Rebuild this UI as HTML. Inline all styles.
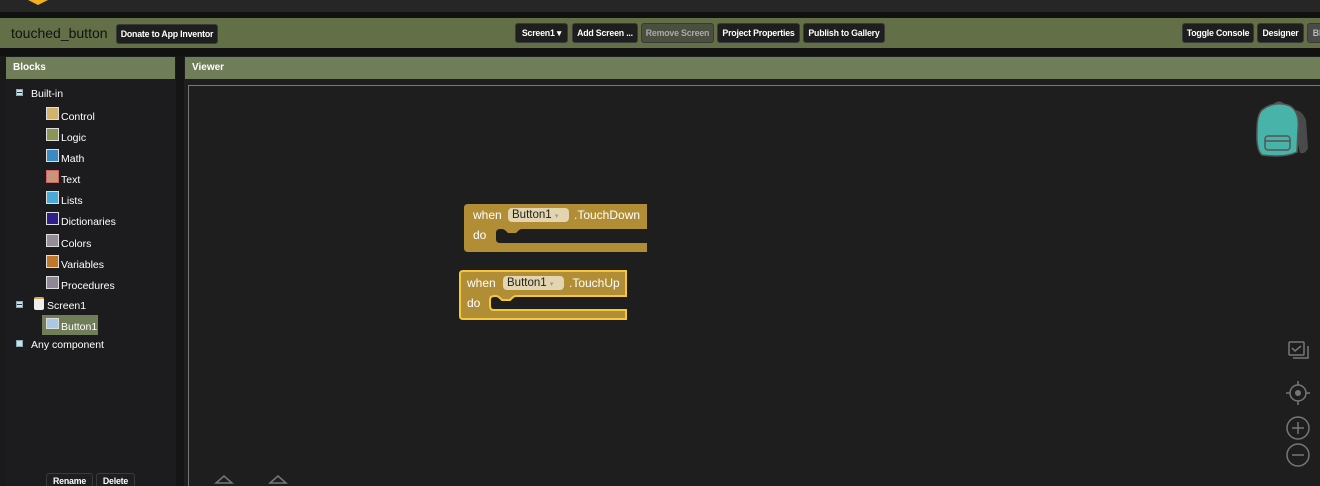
<!DOCTYPE html>
<html style="overflow:hidden;width:1320px;height:486px"><head><style>
*{margin:0;padding:0;box-sizing:border-box}
body{width:1320px;height:486px;background:#1a1a1a;font-family:"Liberation Sans",sans-serif;position:relative;overflow:hidden;color:#fff}
.a{position:absolute}
.btn{position:absolute;top:23px;height:20px;background:#1e1e1e;border:1px solid #3a3a3a;border-radius:3px;color:#fff;font-size:8.8px;font-weight:bold;line-height:18px;text-align:center;white-space:nowrap;overflow:hidden;letter-spacing:-0.2px}
.hdr{background:#6f7d58;font-size:10px;font-weight:bold;line-height:22px;padding-left:7px}
.it{position:absolute;font-size:10.5px;color:#fff}
.sw{position:absolute;width:13px;height:13px;border:1.5px solid #ddd}
.blk{position:absolute;font-size:12px;color:#fff}
.dd{position:absolute;background:#e3d5b0;color:#222;border-radius:4px;font-size:11.5px;height:14px;line-height:14px;padding-left:4px}
</style></head><body>
<div class="a" style="left:0;top:0;width:1320px;height:12px;background:#262626"></div>
<div class="a" style="left:28px;top:0;width:20px;height:5px;background:#f0b020;clip-path:polygon(0 0,100% 0,50% 100%)"></div>
<div class="a" style="left:0;top:12px;width:1320px;height:6px;background:#111"></div>
<div class="a" style="left:0;top:18px;width:1320px;height:30px;background:#636f47"></div>
<div class="a" style="left:11px;top:25px;font-size:14px;color:#111;">touched_button</div>
<div class="btn" style="left:116px;top:24px;width:102px">Donate to App Inventor</div>
<div class="btn" style="left:515px;width:53px">Screen1 ▾</div>
<div class="btn" style="left:572px;width:66px">Add Screen ...</div>
<div class="btn" style="left:641px;width:73px;background:#4a4f40;color:#aaa">Remove Screen</div>
<div class="btn" style="left:717px;width:83px">Project Properties</div>
<div class="btn" style="left:803px;width:82px">Publish to Gallery</div>
<div class="btn" style="left:1182px;width:72px">Toggle Console</div>
<div class="btn" style="left:1257px;width:47px">Designer</div>
<div class="btn" style="left:1307px;width:20px;background:#4a4a4a;color:#bbb">Bl</div>
<div class="a" style="left:0;top:48px;width:1320px;height:8px;background:#111"></div>

<div class="a" style="left:6px;top:56px;width:170px;height:430px;background:#1c1c1e"></div>
<div class="a hdr" style="left:6px;top:57px;width:169px;height:22px">Blocks</div>
<div class="a" style="left:176px;top:56px;width:8px;height:430px;background:#151515"></div>
<div class="a" style="left:184px;top:56px;width:1136px;height:430px;background:#1e1e1e"></div>
<div class="a hdr" style="left:185px;top:57px;width:1135px;height:22px">Viewer</div>
<div class="a" style="left:188px;top:85px;width:1132px;height:401px;border:1px solid #777;border-right:none;border-bottom:none"></div>

<div class="a" style="left:16px;top:89px;width:7px;height:7px;background:#cfdcef;border:1px solid #8aa"></div>
<div class="a" style="left:17px;top:92px;width:5px;height:1px;background:#234"></div>
<div class="it" style="left:31px;top:88px">Built-in</div>
<div class="sw" style="left:46px;top:107px;background:#d3b26a"></div><div class="it" style="left:61px;top:111px">Control</div>
<div class="sw" style="left:46px;top:128px;background:#8c9456"></div><div class="it" style="left:61px;top:132px">Logic</div>
<div class="sw" style="left:46px;top:149px;background:#3b8ac6"></div><div class="it" style="left:61px;top:153px">Math</div>
<div class="sw" style="left:46px;top:170px;background:#c8957b;border-color:#c66"></div><div class="it" style="left:61px;top:174px">Text</div>
<div class="sw" style="left:46px;top:191px;background:#4aa9d8"></div><div class="it" style="left:61px;top:195px">Lists</div>
<div class="sw" style="left:46px;top:212px;background:#2e1f8a"></div><div class="it" style="left:61px;top:216px">Dictionaries</div>
<div class="sw" style="left:46px;top:234px;background:#958c95"></div><div class="it" style="left:61px;top:238px">Colors</div>
<div class="sw" style="left:46px;top:255px;background:#c0772b"></div><div class="it" style="left:61px;top:259px">Variables</div>
<div class="sw" style="left:46px;top:276px;background:#8f8795"></div><div class="it" style="left:61px;top:280px">Procedures</div>
<div class="a" style="left:16px;top:301px;width:7px;height:7px;background:#cfdcef;border:1px solid #8aa"></div>
<div class="a" style="left:17px;top:304px;width:5px;height:1px;background:#234"></div>
<div class="a" style="left:34px;top:297px;width:10px;height:13px;background:#eee;border-top:2px solid #d9a84a;border-radius:2px"></div>
<div class="it" style="left:47px;top:300px">Screen1</div>
<div class="a" style="left:42px;top:315px;width:56px;height:20px;background:#6f7d58"></div>
<div class="a" style="left:46px;top:318px;width:13px;height:11px;background:#a9c8e4;border:1px solid #ddd"></div>
<div class="it" style="left:61px;top:321px">Button1</div>
<div class="a" style="left:16px;top:340px;width:7px;height:7px;background:#cfdcef;border:1px solid #8aa"></div>
<div class="it" style="left:31px;top:339px">Any component</div>
<div class="btn" style="left:46px;top:473px;width:47px;height:16px;line-height:14px">Rename</div>
<div class="btn" style="left:96px;top:473px;width:39px;height:16px;line-height:14px">Delete</div>

<svg class="a" style="left:0;top:0" width="1320" height="486">
<path d="M468 204 H647 V229 H522 Q520 229 518 231 L516 233 H508 L506 231 Q504 229 502 229 H500 Q496 229 496 233 V239 Q496 243 500 243 H647 V252 H468 Q464 252 464 248 V208 Q464 204 468 204Z" fill="#b18e35"/>
<path d="M463 271 H626 V296 H516 Q514 296 512 298 L510 300 H502 L500 298 Q498 296 496 296 H494 Q490 296 490 300 V306 Q490 310 494 310 H626 V319 H463 Q460 319 460 316 V274 Q460 271 463 271Z" fill="#b18e35" stroke="#f5c838" stroke-width="2"/>
<g fill="none" stroke="#777" stroke-width="1.5">
<rect x="1289" y="342" width="15" height="13" rx="1"/><path d="M1293 358 H1308 V346"/><path d="M1292 348 l3 3 l6 -5"/>
<circle cx="1298" cy="393" r="8"/><path d="M1298 381 V385 M1298 401 V405 M1286 393 H1290 M1306 393 H1310"/>
<circle cx="1298" cy="428" r="11"/><path d="M1292 428 H1304 M1298 422 V434"/>
<circle cx="1298" cy="455" r="11"/><path d="M1292 455 H1304"/>
<path d="M216 483 L224 476 L232 483 Z M270 483 L278 476 L286 483 Z"/>
</g>
<circle cx="1298" cy="393" r="3" fill="#777"/>
<path d="M1290 112 Q1300 106 1306 120 L1308 148 Q1306 154 1300 153 Z" fill="#4a4a4a"/>
<path d="M1275 104 Q1279 101 1283 104" fill="none" stroke="#555" stroke-width="2"/>
<path d="M1262 110 Q1275 100 1290 106 Q1300 112 1298 130 L1297 152 Q1285 158 1262 155 Q1256 150 1257 130 Q1257 115 1262 110Z" fill="#48b3a8" stroke="#555" stroke-width="1.5"/>
<rect x="1265" y="136" width="25" height="14" rx="3" fill="none" stroke="#555" stroke-width="1.5"/>
<path d="M1265 141 H1290" stroke="#555" stroke-width="1.5"/>
</svg>
<div class="blk" style="left:473px;top:208px">when</div>
<div class="dd" style="left:508px;top:208px;width:61px">Button1 <span style="color:#999;font-size:7px">▾</span></div>
<div class="blk" style="left:574px;top:208px">.TouchDown</div>
<div class="blk" style="left:473px;top:228px">do</div>
<div class="blk" style="left:467px;top:276px">when</div>
<div class="dd" style="left:503px;top:276px;width:61px">Button1 <span style="color:#999;font-size:7px">▾</span></div>
<div class="blk" style="left:569px;top:276px">.TouchUp</div>
<div class="blk" style="left:467px;top:296px">do</div>
</body></html>
